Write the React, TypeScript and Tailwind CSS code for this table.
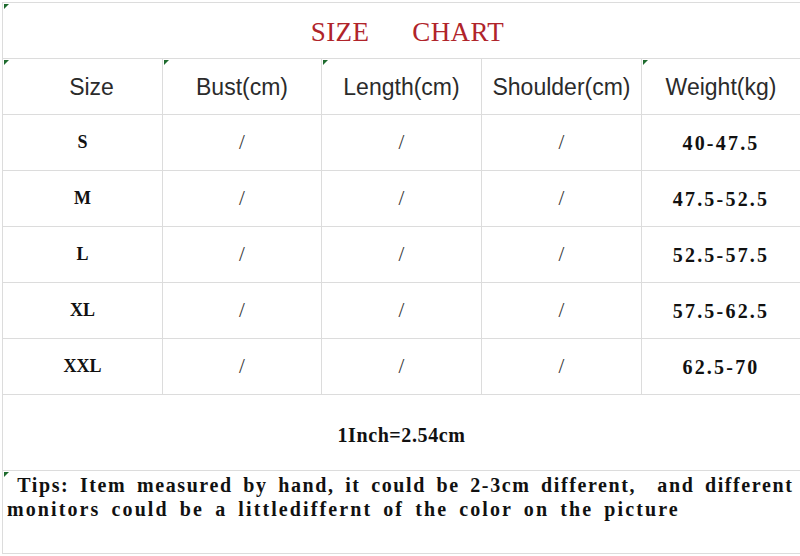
import React from "react";

const headers = ["Size", "Bust(cm)", "Length(cm)", "Shoulder(cm)", "Weight(kg)"];
const flagged = [true, true, true, false, true];

const rows = [
  { size: "S", weight: "40-47.5" },
  { size: "M", weight: "47.5-52.5" },
  { size: "L", weight: "52.5-57.5" },
  { size: "XL", weight: "57.5-62.5" },
  { size: "XXL", weight: "62.5-70" },
];

const cols = "grid grid-cols-[160px_159px_160px_160px_1fr]";
const line = "border-[#dcdcdc]";
const serif = "font-['Liberation_Serif','Times_New_Roman',serif]";

function Flag() {
  return (
    <span className="absolute left-[1px] top-[1px] h-0 w-0 border-t-[5px] border-r-[5px] border-t-[#1e6b2e] border-r-transparent" />
  );
}

function App() {
  return (
    <div className="h-[556px] w-[800px] overflow-hidden bg-white pl-[2px] pt-[2px]">
      <div className={`border-t ${line}`}>
        {/* title */}
        <div className={`relative flex h-[56px] items-center justify-center border-b border-l ${line}`}>
          <Flag />
          <span className={`whitespace-pre pl-[12px] pt-[4px] ${serif} text-[27px] tracking-[0.4px] text-[#b0242a]`}>
            SIZE      CHART
          </span>
        </div>

        {/* header row */}
        <div className={`${cols} h-[56px]`}>
          {headers.map((h, i) => (
            <div
              key={h}
              className={`relative flex items-center justify-center border-b border-l ${line} pt-[2px] font-['Liberation_Sans',Arial,sans-serif] text-[23px] text-[#2b2b2b] ${i === 0 ? "pl-[18px]" : ""}`}
            >
              {flagged[i] && <Flag />}
              {h}
            </div>
          ))}
        </div>

        {/* data rows */}
        {rows.map((r) => (
          <div key={r.size} className={`${cols} h-[56px]`}>
            <div className={`flex items-center justify-center border-b border-l ${line} ${serif} text-[18px] font-bold text-[#111]`}>
              {r.size}
            </div>
            {[0, 1, 2].map((k) => (
              <div
                key={k}
                className={`flex items-center justify-center border-b border-l ${line} ${serif} text-[21px] text-[#333]`}
              >
                /
              </div>
            ))}
            <div className={`flex items-center justify-center border-b border-l ${line} ${serif} text-[20px] font-bold tracking-[2.2px] text-[#111]`}>
              {r.weight}
            </div>
          </div>
        ))}

        {/* conversion */}
        <div className={`flex h-[76px] items-center justify-center border-b border-l ${line} pt-[4px] ${serif} text-[20px] font-bold tracking-[0.6px] text-[#111]`}>
          1Inch=2.54cm
        </div>

        {/* tips */}
        <div className={`relative h-[83px] border-b border-l ${line} pl-[4px] pt-[2px] ${serif} text-[20px] font-bold leading-[24px] text-[#111] [word-spacing:4px]`}>
          <Flag />
          <div className="whitespace-pre tracking-[1.6px]"> Tips: Item measured by hand, it could be 2-3cm different,  and different</div>
          <div className="whitespace-pre tracking-[2.1px]">monitors could be a littlediffernt of the color on the picture</div>
        </div>
      </div>
    </div>
  );
}

export default App;
